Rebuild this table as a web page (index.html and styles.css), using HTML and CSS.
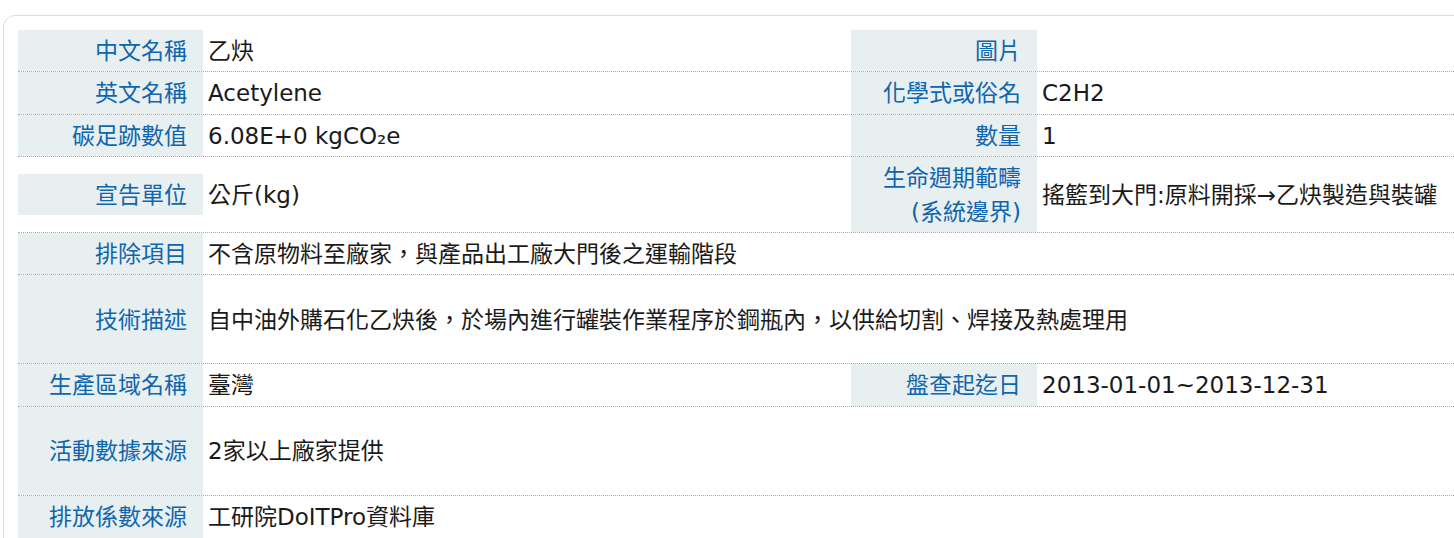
FILE: index.html
```html
<!DOCTYPE html>
<html lang="zh-Hant">
<head>
<meta charset="utf-8">
<title>乙炔</title>
<link rel="stylesheet" href="styles.css">
</head>
<body>
<div class="card">
  <div class="tbl">
    <div class="row">
      <div class="pair pair-l"><div class="lbl">中文名稱</div><div class="val">乙炔</div></div>
      <div class="pair pair-r"><div class="lbl lbl-r">圖片</div><div class="val"></div></div>
    </div>
    <div class="row">
      <div class="pair pair-l"><div class="lbl">英文名稱</div><div class="val">Acetylene</div></div>
      <div class="pair pair-r"><div class="lbl lbl-r">化學式或俗名</div><div class="val">C2H2</div></div>
    </div>
    <div class="row">
      <div class="pair pair-l"><div class="lbl">碳足跡數值</div><div class="val">6.08E+0 kgCO₂e</div></div>
      <div class="pair pair-r"><div class="lbl lbl-r">數量</div><div class="val">1</div></div>
    </div>
    <div class="row">
      <div class="pair pair-l"><div class="lbl">宣告單位</div><div class="val">公斤(kg)</div></div>
      <div class="pair pair-r"><div class="lbl lbl-r"><span class="lbl-text">生命週期範疇<br>(系統邊界)</span></div><div class="val">搖籃到大門:原料開採→乙炔製造與裝罐</div></div>
    </div>
    <div class="row">
      <div class="pair pair-full"><div class="lbl">排除項目</div><div class="val">不含原物料至廠家，與產品出工廠大門後之運輸階段</div></div>
    </div>
    <div class="row row-tall">
      <div class="pair pair-full"><div class="lbl">技術描述</div><div class="val">自中油外購石化乙炔後，於場內進行罐裝作業程序於鋼瓶內，以供給切割、焊接及熱處理用</div></div>
    </div>
    <div class="row">
      <div class="pair pair-l"><div class="lbl">生產區域名稱</div><div class="val">臺灣</div></div>
      <div class="pair pair-r"><div class="lbl lbl-r">盤查起迄日</div><div class="val">2013-01-01~2013-12-31</div></div>
    </div>
    <div class="row row-tall">
      <div class="pair pair-full"><div class="lbl">活動數據來源</div><div class="val">2家以上廠家提供</div></div>
    </div>
    <div class="row row-last">
      <div class="pair pair-full"><div class="lbl">排放係數來源</div><div class="val">工研院DoITPro資料庫</div></div>
    </div>
  </div>
</div>
</body>
</html>
```

FILE: styles.css
```css
html, body {
  margin: 0;
  overflow: hidden;
  background: #fff;
}

body {
  padding: 15px 0 0 3px;
  font-family: "DejaVu Sans", "Noto Sans CJK TC", sans-serif;
  font-size: 23px;
}

.card {
  width: 1700px;
  min-height: 620px;
  box-sizing: border-box;
  border: 1px solid #dcdcdc;
  border-radius: 12px;
  padding: 14px 0 0 14px;
}

.tbl {
  width: 1666px;
}

.row {
  display: flex;
  align-items: stretch;
  border-bottom: 1px dotted #aaaaaa;
}

.row-tall {
  min-height: 89px;
  box-sizing: border-box;
}

.row-last {
  min-height: 80px;
  border-bottom: none;
}

.pair {
  display: flex;
}

.pair-l {
  width: 833px;
  align-self: center;
}

.pair-r {
  width: 833px;
}

.pair-full {
  flex: 1;
}

.lbl {
  flex: none;
  width: 185px;
  box-sizing: border-box;
  display: flex;
  align-items: center;
  justify-content: flex-end;
  text-align: right;
  padding: 5px 16px 3px 0;
  line-height: 33.4px;
  background: #e8eff1;
  color: #0f66ad;
  white-space: nowrap;
}

.lbl-r {
  width: 186px;
}

.lbl-text {
  display: block;
  text-align: right;
}

.val {
  flex: 1;
  display: flex;
  align-items: center;
  padding: 5px 5px 3px;
  line-height: 33.4px;
  color: #1a1a1a;
  white-space: nowrap;
}

.row-last .lbl,
.row-last .val {
  align-items: flex-start;
}
```
